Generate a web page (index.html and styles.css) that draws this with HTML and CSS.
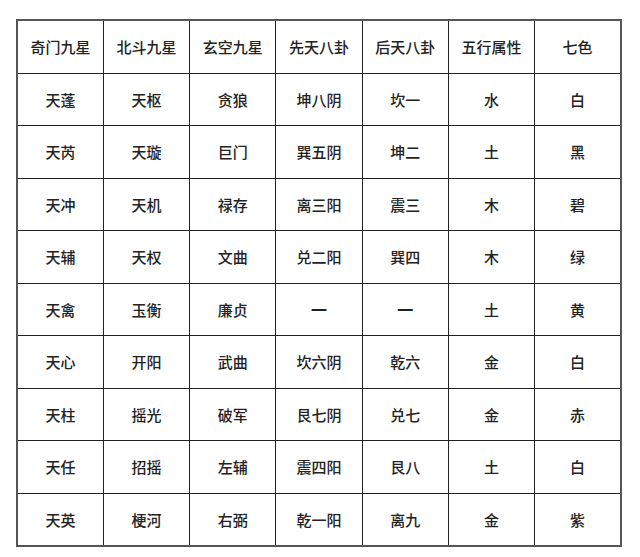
FILE: index.html
```html
<!DOCTYPE html>
<html lang="zh">
<head>
<meta charset="utf-8">
<link rel="stylesheet" href="styles.css">
</head>
<body>
<table class="grid">
<tr><td>奇门九星</td><td>北斗九星</td><td>玄空九星</td><td>先天八卦</td><td>后天八卦</td><td>五行属性</td><td>七色</td></tr>
<tr><td>天蓬</td><td>天枢</td><td>贪狼</td><td>坤八阴</td><td>坎一</td><td>水</td><td>白</td></tr>
<tr><td>天芮</td><td>天璇</td><td>巨门</td><td>巽五阴</td><td>坤二</td><td>土</td><td>黑</td></tr>
<tr><td>天冲</td><td>天机</td><td>禄存</td><td>离三阳</td><td>震三</td><td>木</td><td>碧</td></tr>
<tr><td>天辅</td><td>天权</td><td>文曲</td><td>兑二阳</td><td>巽四</td><td>木</td><td>绿</td></tr>
<tr><td>天禽</td><td>玉衡</td><td>廉贞</td><td class="dash">一</td><td class="dash">一</td><td>土</td><td>黄</td></tr>
<tr><td>天心</td><td>开阳</td><td>武曲</td><td>坎六阴</td><td>乾六</td><td>金</td><td>白</td></tr>
<tr><td>天柱</td><td>摇光</td><td>破军</td><td>艮七阴</td><td>兑七</td><td>金</td><td>赤</td></tr>
<tr><td>天任</td><td>招摇</td><td>左辅</td><td>震四阳</td><td>艮八</td><td>土</td><td>白</td></tr>
<tr><td>天英</td><td>梗河</td><td>右弼</td><td>乾一阳</td><td>离九</td><td>金</td><td>紫</td></tr>
</table>
</body>
</html>
```
FILE: styles.css
```css
html, body {
  margin: 0;
  padding: 0;
  background: #ffffff;
}
body {
  padding: 19px 0 0 16px;
  font-family: "Noto Sans CJK SC", "Noto Sans", sans-serif;
  color: #222222;
}
.grid {
  border-collapse: collapse;
  width: 606px;
  table-layout: fixed;
  border: 2px solid #555555;
}
.grid td {
  border: 1px solid #222222;
  height: 51.5px;
  padding: 0;
  text-align: center;
  vertical-align: middle;
  font-size: 15px;
  font-weight: 500;
  line-height: 1;
}
.grid td.dash {
  font-weight: 700;
  font-size: 16px;
}
```
